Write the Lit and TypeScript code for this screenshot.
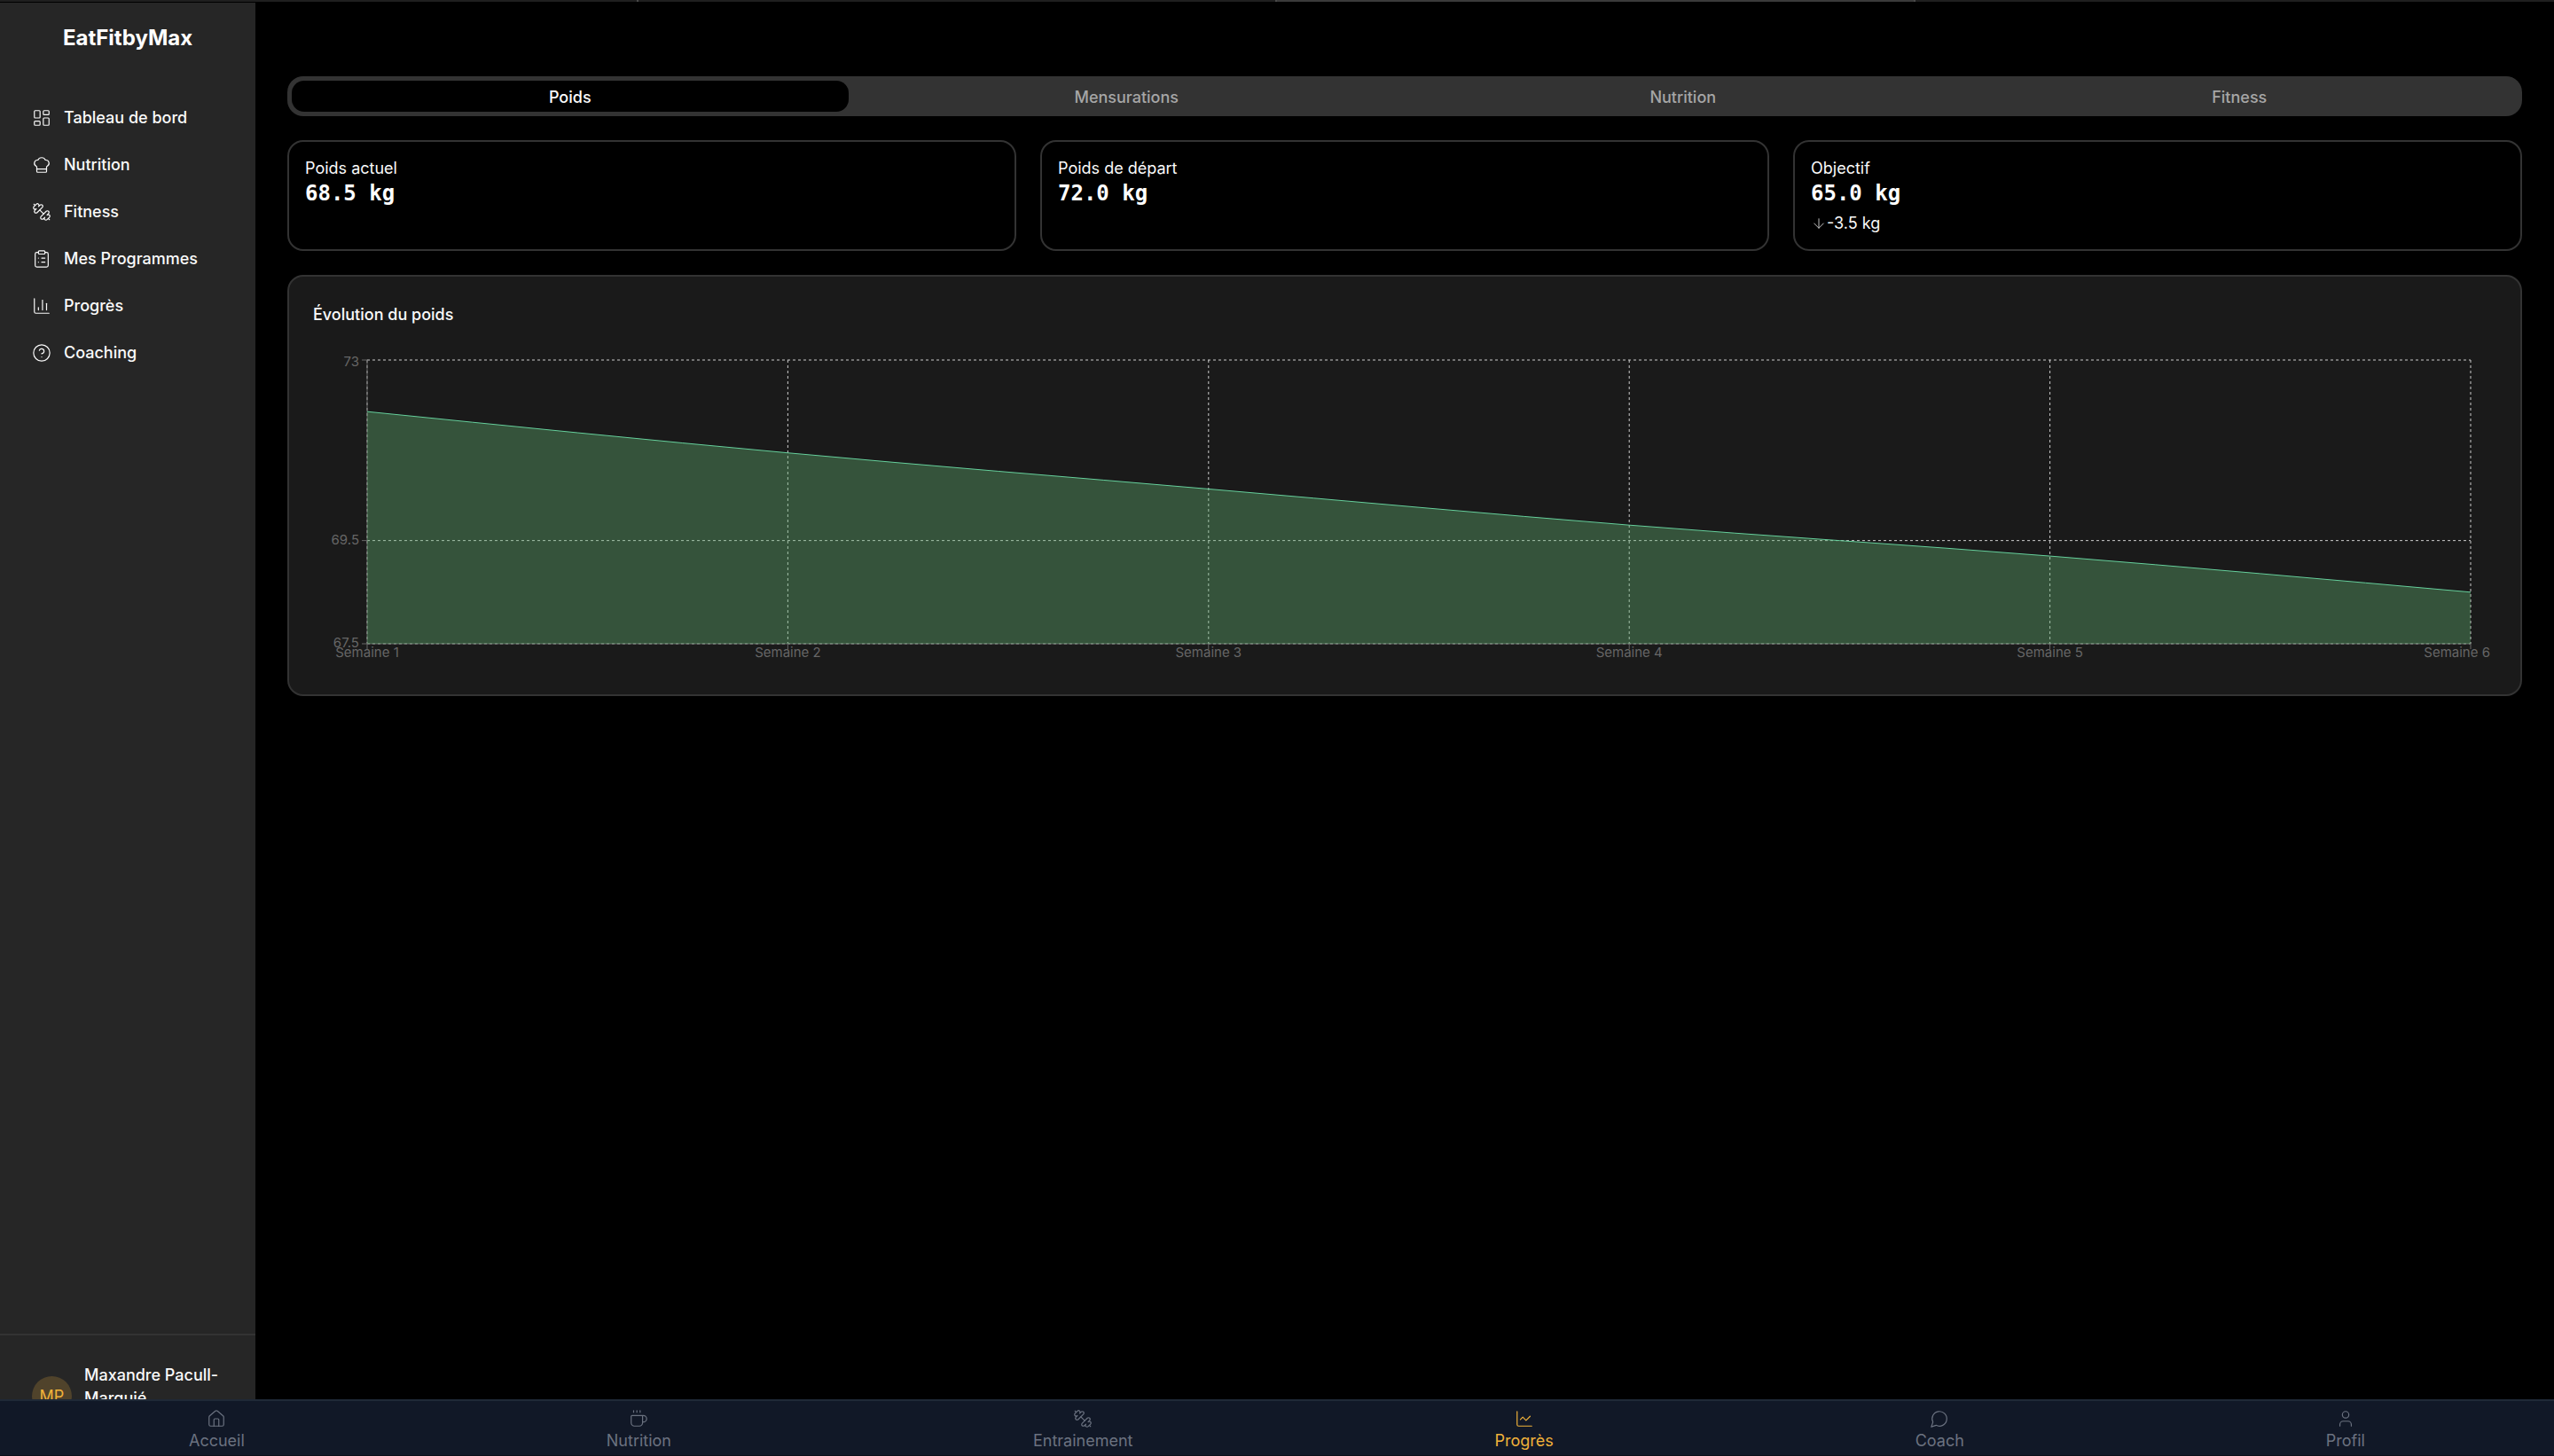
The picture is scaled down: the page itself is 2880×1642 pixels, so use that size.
import { LitElement, html, svg, css, nothing, type SVGTemplateResult } from "lit";
import { customElement, property, state } from "lit/decorators.js";
import { classMap } from "lit/directives/class-map.js";

/* Line icons on a 24-unit grid. */
const ICONS: Record<string, SVGTemplateResult> = {
  dashboard: svg`<rect x="3" y="3" width="7" height="9" rx="1"/><rect x="14" y="3" width="7" height="5" rx="1"/><rect x="14" y="12" width="7" height="9" rx="1"/><rect x="3" y="16" width="7" height="5" rx="1"/>`,
  chef: svg`<path d="M17 21a1 1 0 0 0 1-1v-5.350c0-.457.316-.844.727-1.041a4 4 0 0 0-2.134-7.589 5 5 0 0 0-9.186 0 4 4 0 0 0-2.134 7.588c.411.198.727.585.727 1.041V20a1 1 0 0 0 1 1Z"/><path d="M6 17h12"/>`,
  dumbbell: svg`<path d="M14.4 14.4 9.600 9.600"/><path d="M18.657 21.485a2 2 0 1 1-2.829-2.828l-1.767 1.768a2 2 0 1 1-2.829-2.829l6.364-6.364a2 2 0 1 1 2.829 2.829l-1.768 1.767a2 2 0 1 1 2.828 2.829z"/><path d="m21.5 21.5-1.4-1.4"/><path d="M3.9 3.900 2.500 2.500"/><path d="M6.404 12.768a2 2 0 1 1-2.829-2.829l1.768-1.767a2 2 0 1 1-2.828-2.829l2.828-2.828a2 2 0 1 1 2.829 2.828l1.767-1.768a2 2 0 1 1 2.829 2.829z"/>`,
  clipboard: svg`<rect x="8" y="2" width="8" height="4" rx="1"/><path d="M16 4h2a2 2 0 0 1 2 2v14a2 2 0 0 1-2 2H6a2 2 0 0 1-2-2V6a2 2 0 0 1 2-2h2"/><path d="M12 11h4"/><path d="M12 16h4"/><path d="M8 11h.01"/><path d="M8 16h.01"/>`,
  bars: svg`<path d="M3 3v16a2 2 0 0 0 2 2h16"/><path d="M18 17V9"/><path d="M13 17V5"/><path d="M8 17v-3"/>`,
  help: svg`<circle cx="12" cy="12" r="10"/><path d="M9.090 9a3 3 0 0 1 5.830 1c0 2-3 3-3 3"/><path d="M12 17h.01"/>`,
  home: svg`<path d="M15 21v-8a1 1 0 0 0-1-1h-4a1 1 0 0 0-1 1v8"/><path d="M3 10a2 2 0 0 1 .709-1.528l7-5.999a2 2 0 0 1 2.582 0l7 5.999A2 2 0 0 1 21 10v9a2 2 0 0 1-2 2H5a2 2 0 0 1-2-2z"/>`,
  coffee: svg`<path d="M10 2v2"/><path d="M14 2v2"/><path d="M16 8a1 1 0 0 1 1 1v8a4 4 0 0 1-4 4H7a4 4 0 0 1-4-4V9a1 1 0 0 1 1-1h14a4 4 0 1 1 0 8h-1"/><path d="M6 2v2"/>`,
  line: svg`<path d="M3 3v16a2 2 0 0 0 2 2h16"/><path d="m19 9-5 5-4-4-3 3"/>`,
  message: svg`<path d="M7.900 20A9 9 0 1 0 4 16.100L2 22Z"/>`,
  user: svg`<path d="M19 21v-2a4 4 0 0 0-4-4H9a4 4 0 0 0-4 4v2"/><circle cx="12" cy="7" r="4"/>`,
  down: svg`<path d="M12 5v14"/><path d="m19 12-7 7-7-7"/>`,
};

const icon = (name: string) => html`
  <svg class="icon" viewBox="0 0 24 24" aria-hidden="true">${ICONS[name]}</svg>
`;

const FONT = css`Inter, "Liberation Sans", sans-serif`;

interface Point {
  label: string;
  value: number;
}

/* Area chart that redraws itself to the width of its container. */
@customElement("weight-chart")
export class WeightChart extends LitElement {
  static styles = css`
    :host {
      display: block;
      height: 360px;
      min-width: 0;
    }
    .plot {
      display: block;
      width: 100%;
      height: 100%;
    }
    .grid {
      stroke: #ccc;
      stroke-dasharray: 3 3;
    }
    .axis {
      stroke: #666;
    }
    .area {
      fill: #61b071;
      fill-opacity: 0.38;
    }
    .line {
      fill: none;
      stroke: #66d09c;
    }
    .label {
      fill: #666;
      font: 400 15px ${FONT};
    }
    .start {
      text-anchor: middle;
    }
    .end {
      text-anchor: end;
    }
  `;

  @property({ attribute: false }) points: Point[] = [];
  @property({ attribute: false }) ticks: number[] = [];
  @state() private width = 0;

  private observer = new ResizeObserver(([entry]) => {
    this.width = entry.contentRect.width;
  });

  connectedCallback() {
    super.connectedCallback();
    this.width = this.clientWidth;
    this.observer.observe(this);
  }

  disconnectedCallback() {
    this.observer.disconnect();
    super.disconnectedCallback();
  }

  /* Cubic path whose slopes never overshoot the data. */
  private curve(pts: [number, number][]) {
    const n = pts.length;
    const step = pts[1][0] - pts[0][0];
    const d = pts.slice(1).map((p, i) => (p[1] - pts[i][1]) / step);
    const m = pts.map((_, i) => {
      if (i === 0 || i === n - 1) return 0;
      return d[i - 1] * d[i] <= 0
        ? 0
        : Math.sign(d[i]) *
            Math.min(Math.abs(d[i - 1]) * 2, Math.abs(d[i]) * 2, Math.abs(d[i - 1] + d[i]) / 2);
    });
    m[0] = (3 * d[0] - m[1]) / 2;
    m[n - 1] = (3 * d[n - 2] - m[n - 2]) / 2;
    const k = step / 3;
    return pts.slice(1).reduce((path, [x, y], i) => {
      const [px, py] = pts[i];
      return `${path}C${px + k},${py + k * m[i]},${x - k},${y - k * m[i + 1]},${x},${y}`;
    }, `M${pts[0][0]},${pts[0][1]}`);
  }

  render() {
    if (this.width < 200) return nothing;
    const left = 61;
    const right = this.width - 29;
    const top = 10;
    const bottom = 330;
    const min = Math.min(...this.ticks);
    const max = Math.max(...this.ticks);
    const x = (i: number) => left + ((right - left) * i) / (this.points.length - 1);
    const y = (v: number) => bottom - ((v - min) / (max - min)) * (bottom - top);
    const path = this.curve(this.points.map((p, i) => [x(i), y(p.value)]));
    const last = this.points.length - 1;

    return html`
      <svg class="plot" role="img" aria-label="Évolution du poids">
        ${this.ticks.map(
          (t) => svg`<line class="grid" x1=${left} x2=${right} y1=${y(t)} y2=${y(t)} />`
        )}
        ${this.points.map(
          (_, i) => svg`<line class="grid" x1=${x(i)} x2=${x(i)} y1=${top} y2=${bottom} />`
        )}
        <line class="axis" x1=${left} x2=${right} y1=${bottom} y2=${bottom}></line>
        <line class="axis" x1=${left} x2=${left} y1=${top} y2=${bottom}></line>
        ${this.ticks.map(
          (t) => svg`
            <line class="axis" x1=${left - 6} x2=${left} y1=${y(t)} y2=${y(t)} />
            <text class="label end" x=${left - 9} y=${y(t) + (t === max ? 7 : 4)}>${t}</text>`
        )}
        ${this.points.map(
          (p, i) => svg`
            <line class="axis" x1=${x(i)} x2=${x(i)} y1=${bottom} y2=${bottom + 6} />
            <text
              class=${i === last ? "label end" : "label start"}
              x=${i === last ? this.width - 7 : x(i)}
              y=${bottom + 15}
            >${p.label}</text>`
        )}
        <path class="area" d="${path}L${right},${bottom}L${left},${bottom}Z"></path>
        <path class="line" d=${path}></path>
      </svg>
    `;
  }
}

@customElement("app-root")
export class AppRoot extends LitElement {
  static styles = css`
    :host {
      display: flex;
      flex-direction: column;
      min-height: 100vh;
      background: #000;
      color: #fafafa;
      font: 400 18px/23px ${FONT};
    }
    * {
      box-sizing: border-box;
    }
    a {
      color: inherit;
      text-decoration: none;
    }
    .icon {
      width: 22px;
      height: 22px;
      flex: none;
      fill: none;
      stroke: currentColor;
      stroke-width: 1.3;
      stroke-linecap: round;
      stroke-linejoin: round;
    }

    .strip {
      display: grid;
      grid-template-columns: repeat(4, 1fr);
      height: 2px;
      margin-bottom: 1px;
      background: #1f1f1f;
    }
    .slot {
      border-right: 2px solid #4a4a4a;
    }
    .slot.lit {
      background: #3a3a3a;
    }
    .slot:last-child {
      border-right: 0;
    }

    .shell {
      display: flex;
      flex: 1;
    }
    .sidebar {
      display: flex;
      flex-direction: column;
      flex: none;
      width: 288px;
      background: #262626;
    }
    .brand {
      margin: 0;
      padding: 24px 0;
      font-size: 24px;
      line-height: 32px;
      font-weight: 700;
      text-align: center;
      color: #fff;
    }
    .menu {
      display: flex;
      flex-direction: column;
      gap: 27px;
      padding: 37px 36px;
    }
    .entry {
      display: flex;
      align-items: center;
      gap: 14px;
      line-height: 26px;
      font-weight: 500;
    }
    .account {
      display: flex;
      align-items: center;
      gap: 14px;
      margin-top: auto;
      padding: 32px 36px;
      border-top: 2px solid #333;
    }
    .avatar {
      display: grid;
      place-items: center;
      flex: none;
      width: 45px;
      height: 45px;
      border-radius: 50%;
      background: #50432b;
      color: #f0b23a;
    }
    .name {
      padding-bottom: 20px;
      line-height: 26px;
      font-weight: 500;
    }

    .content {
      display: flex;
      flex-direction: column;
      gap: 27px;
      flex: 1;
      min-width: 0;
      padding: 83px 36px 120px;
    }
    .tabs {
      display: grid;
      grid-template-columns: repeat(4, 1fr);
      height: 45px;
      padding: 5px;
      border-radius: 18px;
      background: #333;
    }
    .tab {
      border: 0;
      border-radius: 14px;
      padding: 2px 0 0;
      background: none;
      color: #a6a6a6;
      font: inherit;
      font-weight: 500;
      cursor: pointer;
    }
    .tab.on {
      background: #000;
      color: #fafafa;
    }
    .stats {
      display: grid;
      grid-template-columns: repeat(3, 1fr);
      gap: 27px;
    }
    .card {
      border: 2px solid #333;
      border-radius: 18px;
      padding: 18px;
    }
    .caption {
      margin: 0;
      font-size: 18px;
      font-weight: 400;
    }
    .value {
      margin: 0;
      font: 700 24px/35px "DejaVu Sans Mono", "Liberation Mono", monospace;
      color: #fff;
    }
    .delta {
      display: flex;
      align-items: center;
      margin: 4px 0 0;
    }
    .delta .icon {
      width: 18px;
      height: 18px;
      color: #c4c4c4;
    }
    .panel {
      padding: 27px;
      background: #1a1a1a;
    }
    .heading {
      margin: 0;
      padding-bottom: 25px;
      font-size: 18px;
      line-height: 32px;
      font-weight: 500;
    }

    .dock {
      position: fixed;
      inset: auto 0 0 0;
      display: flex;
      justify-content: space-around;
      height: 64px;
      padding: 9px 9px 0;
      border-top: 2px solid #1f2937;
      border-bottom: 1px solid #0a0e18;
      background: #111827;
      color: #6b7280;
    }
    .link {
      display: flex;
      flex-direction: column;
      align-items: center;
      gap: 2px;
    }
    .link.on {
      color: #f0b23a;
    }
  `;

  @state() private tab = "Poids";

  private tabs = ["Poids", "Mensurations", "Nutrition", "Fitness"];

  private menu = [
    ["dashboard", "Tableau de bord"],
    ["chef", "Nutrition"],
    ["dumbbell", "Fitness"],
    ["clipboard", "Mes Programmes"],
    ["bars", "Progrès"],
    ["help", "Coaching"],
  ];

  private dock = [
    ["home", "Accueil"],
    ["coffee", "Nutrition"],
    ["dumbbell", "Entrainement"],
    ["line", "Progrès"],
    ["message", "Coach"],
    ["user", "Profil"],
  ];

  private stats = [
    { label: "Poids actuel", value: "68.5 kg" },
    { label: "Poids de départ", value: "72.0 kg" },
    { label: "Objectif", value: "65.0 kg", delta: "-3.5 kg" },
  ];

  private weights: Point[] = [72, 71.2, 70.5, 69.8, 69.2, 68.5].map((value, i) => ({
    label: `Semaine ${i + 1}`,
    value,
  }));

  render() {
    return html`
      <div class="strip">
        ${[0, 1, 2, 3].map((i) => html`<span class=${classMap({ slot: true, lit: i === 2 })}></span>`)}
      </div>
      <div class="shell">
        <aside class="sidebar">
          <h1 class="brand">EatFitbyMax</h1>
          <nav class="menu">
            ${this.menu.map(([i, label]) => html`<a class="entry" href="#">${icon(i)}<span>${label}</span></a>`)}
          </nav>
          <div class="account">
            <span class="avatar">MP</span>
            <span class="name">Maxandre Pacull-Marquié</span>
          </div>
        </aside>
        <main class="content">
          <div class="tabs" role="tablist">
            ${this.tabs.map(
              (t) => html`<button
                class=${classMap({ tab: true, on: t === this.tab })}
                role="tab"
                aria-selected=${t === this.tab}
                @click=${() => (this.tab = t)}
              >${t}</button>`
            )}
          </div>
          <section class="stats">
            ${this.stats.map(
              (s) => html`<article class="card">
                <h2 class="caption">${s.label}</h2>
                <p class="value">${s.value}</p>
                ${s.delta ? html`<p class="delta">${icon("down")}<span>${s.delta}</span></p>` : nothing}
              </article>`
            )}
          </section>
          <section class="card panel">
            <h2 class="heading">Évolution du poids</h2>
            <weight-chart .points=${this.weights} .ticks=${[67.5, 69.5, 73]}></weight-chart>
          </section>
        </main>
      </div>
      <nav class="dock">
        ${this.dock.map(
          ([i, label]) => html`<a class=${classMap({ link: true, on: label === "Progrès" })} href="#">
            ${icon(i)}<span>${label}</span>
          </a>`
        )}
      </nav>
    `;
  }
}
